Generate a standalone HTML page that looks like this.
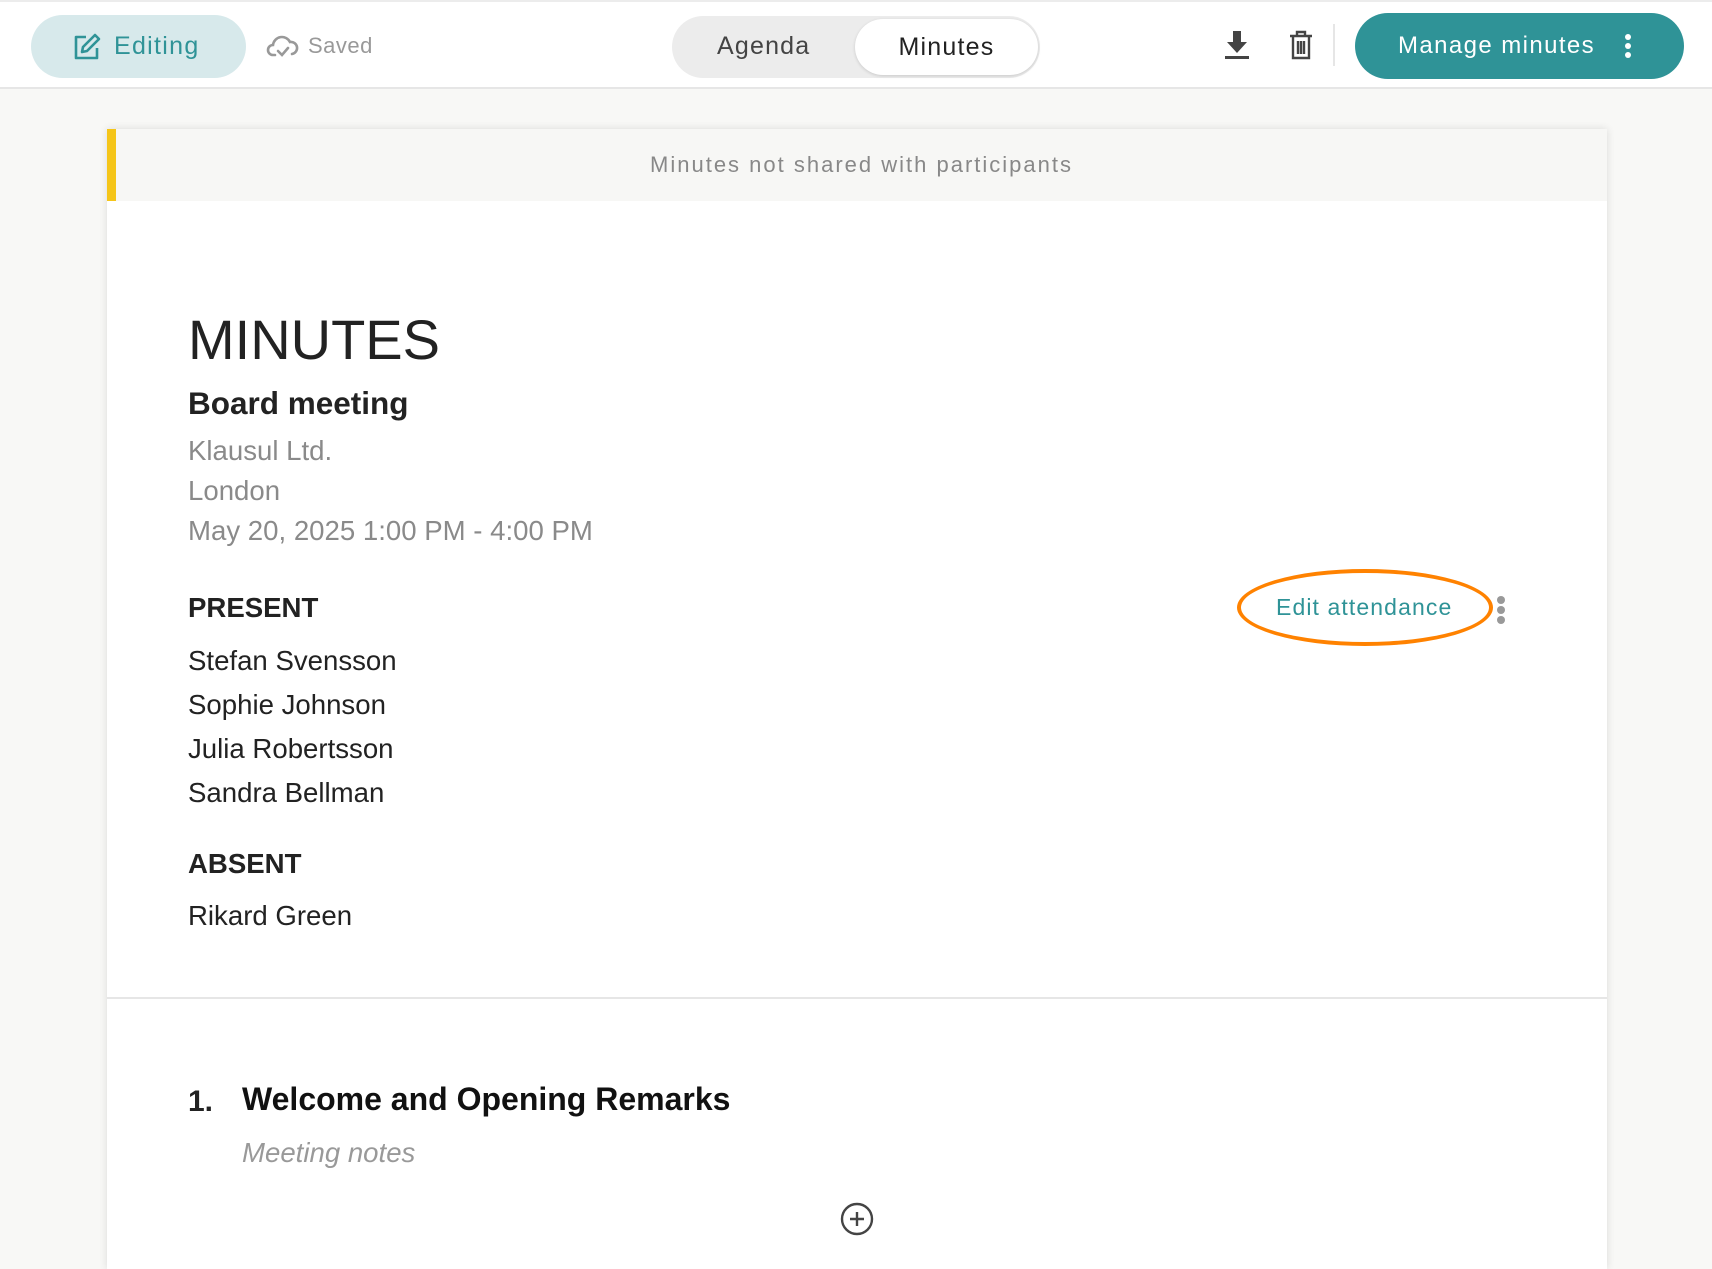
<!DOCTYPE html>
<html><head><meta charset="utf-8"><style>
*{box-sizing:border-box;margin:0;padding:0}
body{width:1712px;height:1256px;overflow:hidden;background:#f8f8f6;font-family:"Liberation Sans",sans-serif;position:relative}
.top{position:absolute;left:0;top:0;width:1712px;height:89px;background:#fff;border-bottom:2px solid #e6e6e6;border-top:2px solid #ececec}
.abs{position:absolute}
.pill{left:31px;top:13px;width:215px;height:63px;border-radius:32px;background:#d7e9eb;color:#2f9397;font-size:25px;display:flex;align-items:center;padding-left:41px;letter-spacing:1.3px}
.pill span{margin-left:12px}
.saved{left:266px;top:30px;color:#999;font-size:22px;display:flex;align-items:center;letter-spacing:.5px}
.toggle{left:672px;top:14px;width:368px;height:62px;border-radius:31px;background:#ececec}
.tog1{left:717px;top:30px;font-size:25px;color:#444;letter-spacing:1.2px}
.tog2{left:855px;top:17px;width:183px;height:56px;border-radius:28px;background:#fff;box-shadow:0 1px 3px rgba(0,0,0,.15);font-size:25px;color:#222;text-align:center;line-height:56px;letter-spacing:1.2px}
.mg{left:1355px;top:11px;width:329px;height:66px;border-radius:33px;background:#2f9397;color:#fff;font-size:24px;line-height:66px;padding-left:43px;letter-spacing:1.4px}
.card{left:107px;top:129px;width:1500px;height:1140px;background:#fff;box-shadow:0 0 8px rgba(0,0,0,.12)}
.banner{left:0;top:0;width:1500px;height:72px;background:#f7f7f5;border-left:9px solid #f5c518;color:#888;font-size:22px;text-align:center;line-height:72px;letter-spacing:2px}
.t{position:absolute;left:81px;white-space:nowrap;font-size:27.6px}
</style></head><body>
<div class="top">
<div class="abs pill"><svg width="30" height="30" viewBox="0 0 30 30" fill="none" stroke="#2f9397" stroke-width="2.6" stroke-linejoin="round"><path d="M14 5H4v21h21V16"/><path d="M23 3l4 4-12 12-5 1 1-5z"/></svg><span>Editing</span></div>
<div class="abs saved"><svg width="34" height="28" viewBox="0 0 34 28" fill="none" stroke="#999" stroke-width="2.6" stroke-linecap="round"><path d="M9 23H7a5 5 0 0 1 0-10 9 9 0 0 1 17-3 6 6 0 0 1 2 12"/><path d="M12 19l4 4 6-7"/></svg><span style="margin-left:8px">Saved</span></div>
<div class="abs toggle"></div>
<div class="abs tog1">Agenda</div>
<div class="abs tog2">Minutes</div>
<svg class="abs" style="left:1223px;top:27px" width="28" height="32" viewBox="0 0 28 32"><path d="M10 2h8v11h6l-10 11L4 13h6z" fill="#444"/><rect x="2" y="27" width="24" height="3" fill="#444"/></svg>
<svg class="abs" style="left:1288px;top:27px" width="26" height="32" viewBox="0 0 26 32" fill="none" stroke="#444" stroke-width="2.4"><path d="M2 7h22M9 7V3h8v4M5 7v22h16V7M10 12v13M13 12v13M16 12v13"/></svg>
<div class="abs" style="left:1333px;top:22px;width:2px;height:42px;background:#e6e6e6"></div>
<div class="abs mg">Manage minutes<span style="position:absolute;left:270px;top:21px;width:6px;height:24px"><i style="position:absolute;left:0;top:0;width:6px;height:6px;border-radius:3px;background:#fff"></i><i style="position:absolute;left:0;top:9px;width:6px;height:6px;border-radius:3px;background:#fff"></i><i style="position:absolute;left:0;top:18px;width:6px;height:6px;border-radius:3px;background:#fff"></i></span></div>
</div>
<div class="abs card">
<div class="abs banner">Minutes not shared with participants</div>
<div class="t" style="top:178px;font-size:56px;color:#222">MINUTES</div>
<div class="t" style="top:256px;font-size:31.5px;font-weight:bold;color:#222">Board meeting</div>
<div class="t" style="top:306px;color:#8a8a8a">Klausul Ltd.</div>
<div class="t" style="top:346px;color:#8a8a8a">London</div>
<div class="t" style="top:386px;color:#8a8a8a">May 20, 2025 1:00 PM - 4:00 PM</div>
<div class="t" style="top:463px;font-weight:bold;color:#222">PRESENT</div>
<div class="t" style="top:516px;color:#222">Stefan Svensson</div>
<div class="t" style="top:560px;color:#222">Sophie Johnson</div>
<div class="t" style="top:604px;color:#222">Julia Robertsson</div>
<div class="t" style="top:648px;color:#222">Sandra Bellman</div>
<div class="t" style="top:719px;font-weight:bold;color:#222">ABSENT</div>
<div class="t" style="top:771px;color:#222">Rikard Green</div>
<div class="abs" style="left:1130px;top:440px;width:256px;height:77px;border:4px solid #ff8200;border-radius:50%"></div>
<div class="abs" style="left:1169px;top:465px;font-size:23px;color:#2f9397;letter-spacing:1.1px">Edit attendance</div>
<div class="abs" style="left:1390px;top:467px"><i style="position:absolute;top:0;width:8px;height:8px;border-radius:4px;background:#999"></i><i style="position:absolute;top:10px;width:8px;height:8px;border-radius:4px;background:#999"></i><i style="position:absolute;top:20px;width:8px;height:8px;border-radius:4px;background:#999"></i></div>
<div class="abs" style="left:0;top:868px;width:1500px;height:2px;background:#e6e6e6"></div>
<div class="t" style="top:956px;font-size:30px;font-weight:bold;color:#222">1.</div>
<div class="t" style="left:135px;top:952px;font-size:32px;font-weight:bold;color:#111">Welcome and Opening Remarks</div>
<div class="t" style="left:135px;top:1008px;font-style:italic;color:#999">Meeting notes</div>
<svg class="abs" style="left:733px;top:1073px" width="34" height="34" viewBox="0 0 34 34" fill="none" stroke="#444" stroke-width="2.4"><circle cx="17" cy="17" r="15"/><path d="M17 10v14M10 17h14"/></svg>
</div>
</body></html>
